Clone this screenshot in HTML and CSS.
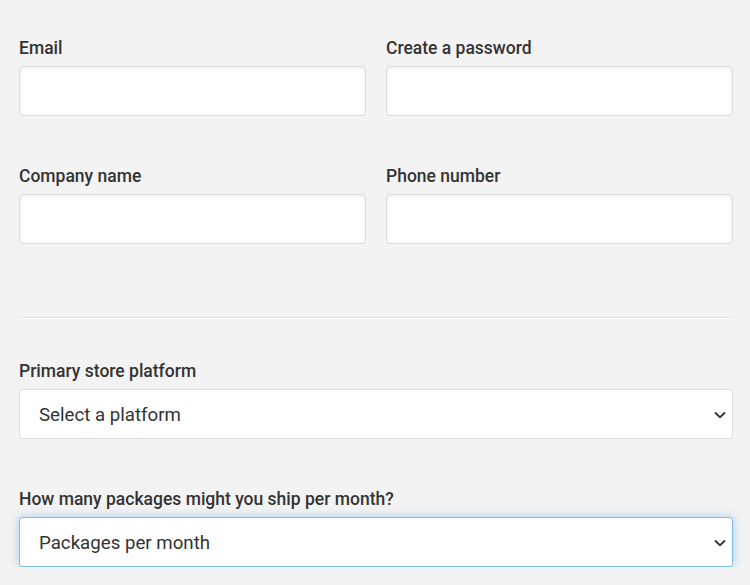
FILE: index.html
```html
<!DOCTYPE html>
<html lang="en">
<head>
<meta charset="utf-8">
<title>Sign up</title>
<link rel="stylesheet" href="styles.css">
</head>
<body>
<form class="form">
  <div class="grid">
    <div class="field">
      <label class="label">Email</label>
      <div class="input"></div>
    </div>
    <div class="field">
      <label class="label">Create a password</label>
      <div class="input"></div>
    </div>
    <div class="field">
      <label class="label">Company name</label>
      <div class="input"></div>
    </div>
    <div class="field">
      <label class="label">Phone number</label>
      <div class="input"></div>
    </div>
  </div>
  <hr class="divider">
  <div class="field">
    <label class="label">Primary store platform</label>
    <div class="select">
      <span class="select-text">Select a platform</span>
      <svg class="chevron" width="12" height="8" viewBox="0 0 12 8"><path d="M1 1.5 L6 6.2 L11 1.5" fill="none" stroke="#333" stroke-width="1.8"/></svg>
    </div>
  </div>
  <div class="field field-last">
    <label class="label">How many packages might you ship per month?</label>
    <div class="select select-focus">
      <span class="select-text">Packages per month</span>
      <svg class="chevron" width="12" height="8" viewBox="0 0 12 8"><path d="M1 1.5 L6 6.2 L11 1.5" fill="none" stroke="#333" stroke-width="1.8"/></svg>
    </div>
  </div>
</form>
</body>
</html>
```
FILE: styles.css
```css
* { box-sizing: border-box; }
html, body {
  margin: 0;
  background: #f3f3f3;
  font-family: Roboto, "Liberation Sans", sans-serif;
  color: #333;
}
.form {
  padding: 38px 17px 0 19px;
}
.grid {
  display: grid;
  grid-template-columns: 1fr 1fr;
  column-gap: 20px;
  row-gap: 50px;
}
.field {
  display: flex;
  flex-direction: column;
}
.label {
  font-size: 17.5px;
  font-weight: 500;
  line-height: 20px;
  margin-bottom: 8px;
  color: #333;
}
.input {
  height: 50px;
  background: #fff;
  border: 1px solid #dcdcdc;
  border-radius: 3px;
  box-shadow: inset 0 1px 4px rgba(0,0,0,0.09);
}
.divider {
  margin: 73px 0 42px;
  border: 0;
  border-top: 1px solid #e2e2e2;
  border-bottom: 1px solid #fff;
  height: 0;
}
.select {
  height: 50px;
  background: #fff;
  border: 1px solid #dcdcdc;
  border-radius: 3px;
  display: flex;
  align-items: center;
  justify-content: space-between;
  padding: 0 6px 0 19px;
}
.select-text {
  font-size: 18.7px;
  color: #333;
  padding-top: 2px;
}
.chevron { display: block; margin-top: 1px; }
.field-last { margin-top: 50px; }
.select-focus {
  border-color: #80bbea;
  box-shadow: 0 0 10px rgba(102,175,233,0.55);
}
```
